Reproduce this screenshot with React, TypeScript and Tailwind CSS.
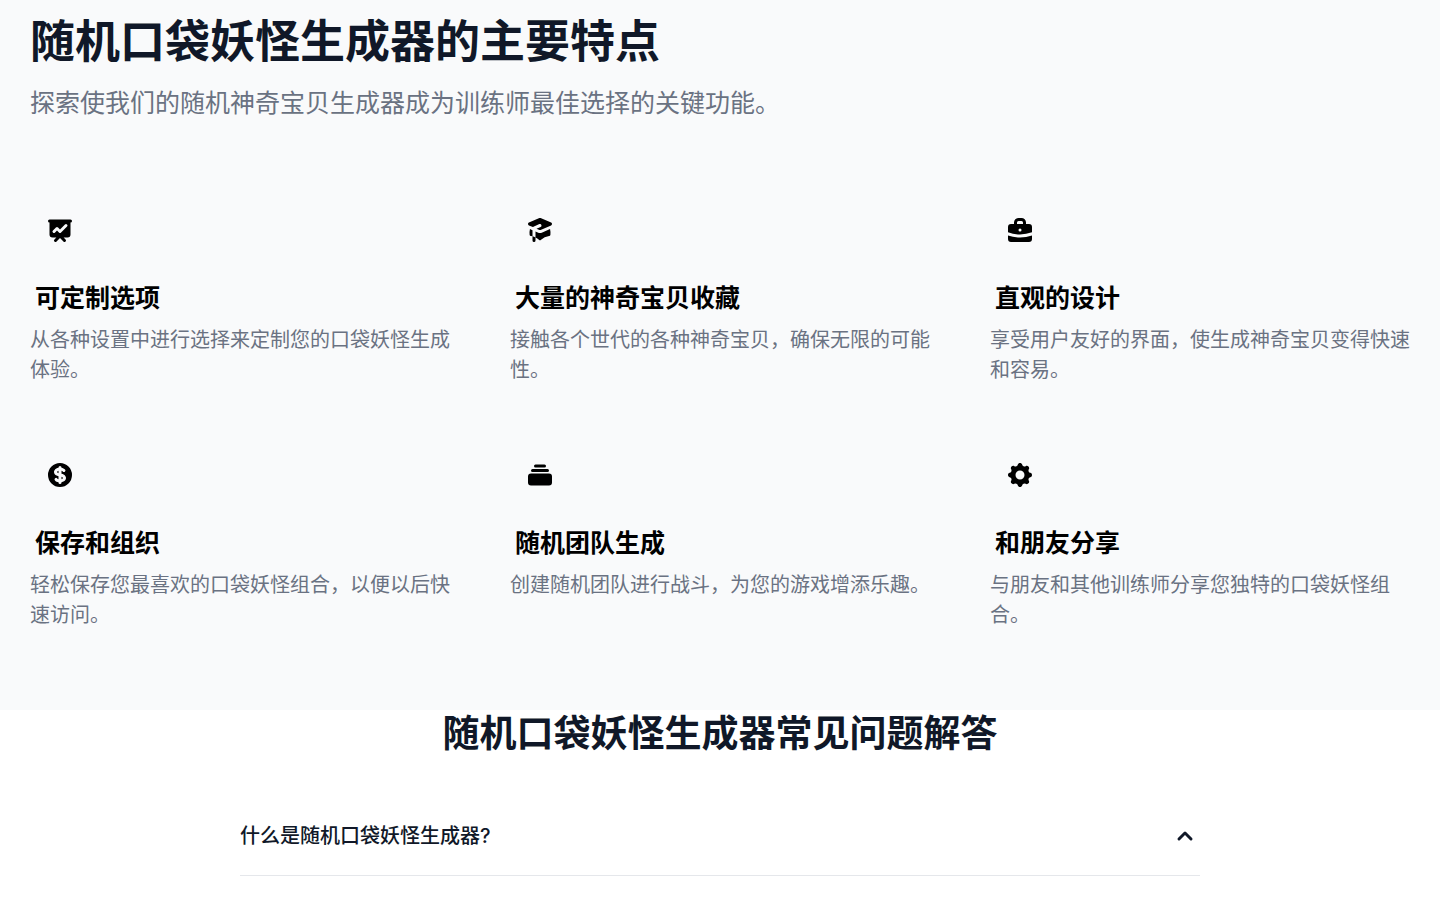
import React from "react";

type Feature = { title: string; text: string; icon: React.ReactNode };

const features: Feature[] = [
  {
    title: "可定制选项",
    text: "从各种设置中进行选择来定制您的口袋妖怪生成体验。",
    icon: (
      <path fillRule="evenodd" d="M3 3a1 1 0 000 2v8a2 2 0 002 2h2.586l-1.293 1.293a1 1 0 101.414 1.414L10 15.414l2.293 2.293a1 1 0 001.414-1.414L12.414 15H15a2 2 0 002-2V5a1 1 0 100-2H3zm11.707 4.707a1 1 0 00-1.414-1.414L10 9.586 8.707 8.293a1 1 0 00-1.414 0l-2 2a1 1 0 101.414 1.414L8 10.414l1.293 1.293a1 1 0 001.414 0l4-4z" clipRule="evenodd" />
    ),
  },
  {
    title: "大量的神奇宝贝收藏",
    text: "接触各个世代的各种神奇宝贝，确保无限的可能性。",
    icon: (
      <path d="M10.394 2.08a1 1 0 00-.788 0l-7 3a1 1 0 000 1.84L5.25 8.051a.999.999 0 01.356-.257l4-1.714a1 1 0 11.788 1.838L7.667 9.088l1.94.831a1 1 0 00.787 0l7-3a1 1 0 000-1.838l-7-3zM3.31 9.397L5 10.12v4.102a8.969 8.969 0 00-1.05-.174 1 1 0 01-.89-.89 11.115 11.115 0 01.25-3.762zM9.3 16.573A9.026 9.026 0 007 14.935v-3.957l1.818.78a3 3 0 002.364 0l5.508-2.361a11.026 11.026 0 01.25 3.762 1 1 0 01-.89.89 8.968 8.968 0 00-5.35 2.524 1 1 0 01-1.4 0zM6 18a1 1 0 001-1v-2.065a8.935 8.935 0 00-2-.712V17a1 1 0 001 1z" />
    ),
  },
  {
    title: "直观的设计",
    text: "享受用户友好的界面，使生成神奇宝贝变得快速和容易。",
    icon: (
      <>
        <path fillRule="evenodd" d="M6 6V5a3 3 0 013-3h2a3 3 0 013 3v1h2a2 2 0 012 2v3.57A22.952 22.952 0 0110 13a22.95 22.95 0 01-8-1.43V8a2 2 0 012-2h2zm2-1a1 1 0 011-1h2a1 1 0 011 1v1H8V5zm1 5a1 1 0 011-1h.01a1 1 0 110 2H10a1 1 0 01-1-1z" clipRule="evenodd" />
        <path d="M2 13.692V16a2 2 0 002 2h12a2 2 0 002-2v-2.308A24.974 24.974 0 0110 15c-2.796 0-5.487-.46-8-1.308z" />
      </>
    ),
  },
  {
    title: "保存和组织",
    text: "轻松保存您最喜欢的口袋妖怪组合，以便以后快速访问。",
    icon: (
      <>
        <path d="M8.433 7.418c.155-.103.346-.196.567-.267v1.698a2.305 2.305 0 01-.567-.267C8.07 8.34 8 8.114 8 8c0-.114.07-.34.433-.582zM11 12.849v-1.698c.22.071.412.164.567.267.364.243.433.468.433.582 0 .114-.07.34-.433.582a2.305 2.305 0 01-.567.267z" />
        <path fillRule="evenodd" d="M10 18a8 8 0 100-16 8 8 0 000 16zm1-13a1 1 0 10-2 0v.092a4.535 4.535 0 00-1.676.662C6.602 6.234 6 7.009 6 8c0 .99.602 1.765 1.324 2.246.48.32 1.054.545 1.676.662v1.941c-.391-.127-.68-.317-.843-.504a1 1 0 10-1.51 1.31c.562.649 1.413 1.076 2.353 1.253V15a1 1 0 102 0v-.092a4.535 4.535 0 001.676-.662C13.398 13.766 14 12.991 14 12c0-.99-.602-1.765-1.324-2.246A4.535 4.535 0 0011 9.092V7.151c.391.127.68.317.843.504a1 1 0 101.511-1.31c-.563-.649-1.413-1.076-2.354-1.253V5z" clipRule="evenodd" />
      </>
    ),
  },
  {
    title: "随机团队生成",
    text: "创建随机团队进行战斗，为您的游戏增添乐趣。",
    icon: (
      <path d="M7 3a1 1 0 000 2h6a1 1 0 100-2H7zM4 7a1 1 0 011-1h10a1 1 0 110 2H5a1 1 0 01-1-1zM2 11a2 2 0 012-2h12a2 2 0 012 2v4a2 2 0 01-2 2H4a2 2 0 01-2-2v-4z" />
    ),
  },
  {
    title: "和朋友分享",
    text: "与朋友和其他训练师分享您独特的口袋妖怪组合。",
    icon: (
      <path fillRule="evenodd" d="M11.49 3.17c-.38-1.56-2.6-1.56-2.98 0a1.532 1.532 0 01-2.286.948c-1.372-.836-2.942.734-2.106 2.106.54.886.061 2.042-.947 2.287-1.561.379-1.561 2.6 0 2.978a1.532 1.532 0 01.947 2.287c-.836 1.372.734 2.942 2.106 2.106a1.532 1.532 0 012.287.947c.379 1.561 2.6 1.561 2.978 0a1.533 1.533 0 012.287-.947c1.372.836 2.942-.734 2.106-2.106a1.533 1.533 0 01.947-2.287c1.561-.379 1.561-2.6 0-2.978a1.532 1.532 0 01-.947-2.287c.836-1.372-.734-2.942-2.106-2.106a1.532 1.532 0 01-2.287-.947zM10 13a3 3 0 100-6 3 3 0 000 6z" clipRule="evenodd" />
    ),
  },
];

export default function App() {
  const [open, setOpen] = React.useState(true);
  return (
    <main className="font-['Inter','Noto_Sans_CJK_SC',sans-serif]" lang="zh-CN">
      <section className="bg-gray-50 px-[30px] pt-3.5 pb-20">
        <header className="mb-20">
          <h2 className="mb-4 text-[45px] leading-[56px] font-bold text-gray-900">随机口袋妖怪生成器的主要特点</h2>
          <p className="text-[25px] leading-[34px] text-gray-500">探索使我们的随机神奇宝贝生成器成为训练师最佳选择的关键功能。</p>
        </header>
        <div className="grid gap-[60px] md:grid-cols-2 lg:grid-cols-3">
          {features.map((f) => (
            <article key={f.title}>
              <div className="mb-5 flex size-[60px] items-center justify-center">
                <svg className="size-[30px]" viewBox="0 0 20 20" fill="currentColor" aria-hidden="true">{f.icon}</svg>
              </div>
              <h3 className="mb-2 ml-[5px] text-[25px] leading-[37px] font-bold text-black">{f.title}</h3>
              <p className="text-xl leading-[30px] text-gray-500">{f.text}</p>
            </article>
          ))}
        </div>
      </section>
      <section className="bg-white px-[30px]">
        <h2 className="text-center text-[37px] leading-[47px] font-bold text-gray-900">随机口袋妖怪生成器常见问题解答</h2>
        <div className="mx-auto mt-10 max-w-[960px] border-b border-gray-200">
          <button
            type="button"
            aria-expanded={open}
            onClick={() => setOpen(!open)}
            className="flex w-full items-center justify-between py-6 text-left text-xl leading-[30px] font-medium text-gray-900"
          >
            <span>什么是随机口袋妖怪生成器?</span>
            <svg className={open ? "size-[30px]" : "size-[30px] rotate-180"} viewBox="0 0 20 20" fill="currentColor" aria-hidden="true">
              <path fillRule="evenodd" d="M14.707 12.707a1 1 0 01-1.414 0L10 9.414l-3.293 3.293a1 1 0 01-1.414-1.414l4-4a1 1 0 011.414 0l4 4a1 1 0 010 1.414z" clipRule="evenodd" />
            </svg>
          </button>
        </div>
      </section>
    </main>
  );
}
